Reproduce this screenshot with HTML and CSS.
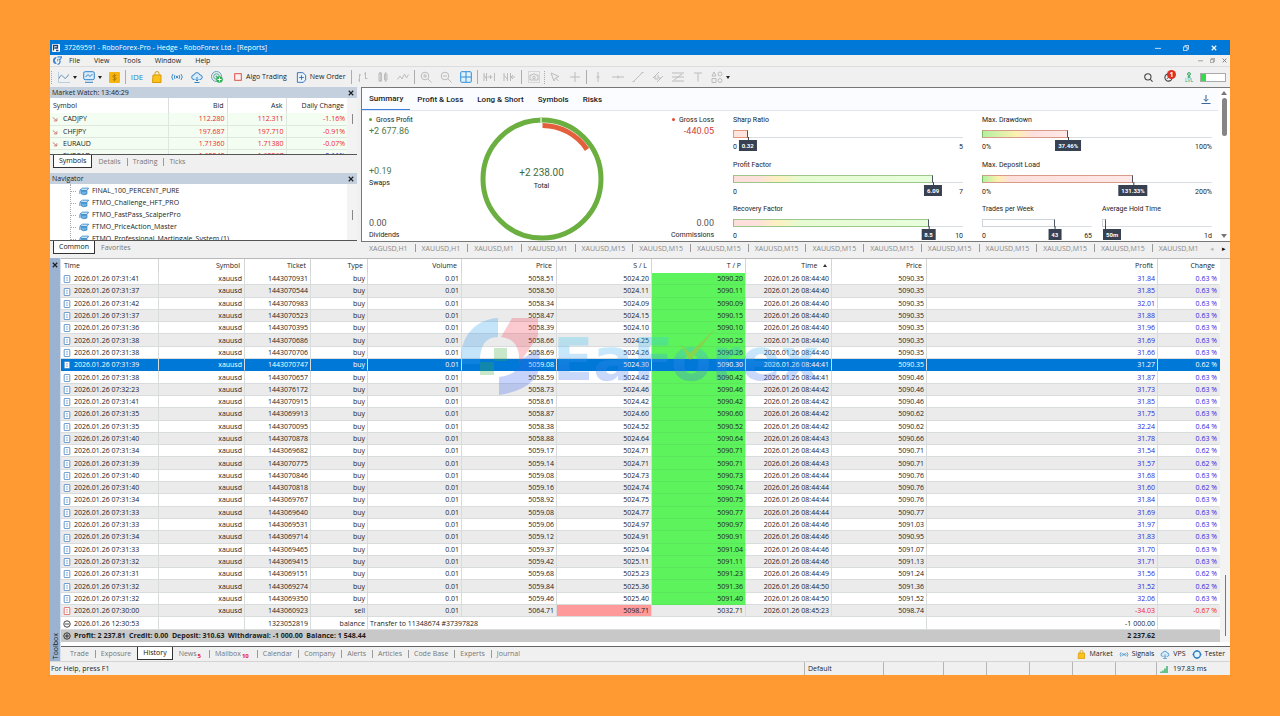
FILE: index.html
```html
<!DOCTYPE html>
<html lang="en">
<head>
<meta charset="utf-8">
<title>37269591 - RoboForex-Pro - Hedge - RoboForex Ltd - [Reports]</title>
<link rel="stylesheet" href="styles.css">
</head>
<body>
<svg class="defs" aria-hidden="true">
  <symbol id="i-bag" viewBox="0 0 12 12"><path d="M2 4h8v7.500H1.500z" fill="#fbc21c" stroke="#d99a06"/><path d="M4 4V2.500a2 2 0 0 1 4 0V4" fill="none" stroke="#d99a06"/></symbol>
  <symbol id="i-signal" viewBox="0 0 12 12"><g fill="none" stroke="#3f8fcb"><path d="M2 3Q-.5 6 2 9M4 4Q2.500 6 4 8M10 3q2.500 3 0 6M8 4q1.500 2 0 4"/></g><circle cx="6" cy="6" r="1.200" fill="#3f8fcb"/></symbol>
  <symbol id="i-cloud" viewBox="0 0 12 12"><path d="M3.500 8.500H3a2.300 2.300 0 0 1 0-4.600 3 3 0 0 1 5.800 0 2.300 2.300 0 0 1 .2 4.600h-.5" fill="#d8ecfa" stroke="#2f83c5"/><path d="M6 6v4M4.500 8.500 6 10l1.500-1.500M3.500 11.500h5" fill="none" stroke="#2f83c5"/></symbol>
  <symbol id="i-cap" viewBox="0 0 12 10"><path d="M1 3.500 4 1h7.500L9.500 4z" fill="#cfe6f8" stroke="#2f83c5"/><path d="M2.500 4.500v3Q5 10 9.500 8V4.500z" fill="#6fb2e6" stroke="#2f83c5"/><path d="M1 4v4" stroke="#2f83c5"/></symbol>
  <symbol id="i-down" viewBox="0 0 8 8"><path d="M1 2 6 6M6.500 3v3.500H2.500" fill="none" stroke="#c25a5a"/></symbol>
  <symbol id="i-doc" viewBox="0 0 8 10"><rect x=".5" y=".5" width="7" height="9" rx="1" fill="#fff" stroke="currentColor"/><path d="M4 2.500v2M4 5.500v2" stroke="currentColor"/></symbol>
  <symbol id="i-minus" viewBox="0 0 8 8"><circle cx="4" cy="4" r="3.200" fill="none" stroke="#444"/><path d="M2 4h4" stroke="#444"/></symbol>
  <symbol id="i-plus" viewBox="0 0 8 8"><circle cx="4" cy="4" r="3.200" fill="none" stroke="#333"/><path d="M2 4h4M4 2v4" stroke="#333"/></symbol>
  <symbol id="i-x" viewBox="0 0 8 8"><path d="M1 1l6 6M7 1 1 7" fill="none" stroke="currentColor" stroke-width="1.500"/></symbol>
  <symbol id="i-min" viewBox="0 0 8 8"><path d="M0 4.500h8" stroke="currentColor"/></symbol>
  <symbol id="i-restore" viewBox="0 0 8 8"><path d="M.5 2.500h5v5h-5zM2.500 2V.5h5v5H6" fill="none" stroke="currentColor"/></symbol>
</svg>

<main class="app">
  <header class="title">
    <svg class="ic8" viewBox="0 0 8 8"><rect width="8" height="8" rx="1" fill="#fff"/><path d="M1.500 6.500V1.500h4v2.500h-3M4 6.500h2.500" fill="none" stroke="#173f78" stroke-width="1.300"/></svg>
    <h1 class="title-text">37269591 - RoboForex-Pro - Hedge - RoboForex Ltd - [Reports]</h1>
    <button class="win" aria-label="Minimize"><svg class="ic6"><use href="#i-min"/></svg></button>
    <button class="win" aria-label="Restore"><svg class="ic6"><use href="#i-restore"/></svg></button>
    <button class="win" aria-label="Close"><svg class="ic6"><use href="#i-x"/></svg></button>
  </header>

  <nav class="menu">
    <svg class="ic9" viewBox="0 0 10 10"><path d="M4 1A4 4 0 0 0 4 9c0-2-2-2-2-4s2-2 2-4z" fill="#3c7fd0"/><path d="M5 1h4.500C9 3 8 4 6.500 4.500M8 5c0 2.500-1 4-3 4.500" fill="none" stroke="#4a8cd8" stroke-width="1.400"/><path d="M5 6V3.500h1.500" fill="none" stroke="#5fa7df"/></svg>
    <button>File</button><button>View</button><button>Tools</button><button>Window</button><button>Help</button>
    <span class="grow"></span>
    <button class="mwin" aria-label="Minimize report"><svg class="ic5"><use href="#i-min"/></svg></button>
    <button class="mwin" aria-label="Restore report"><svg class="ic5"><use href="#i-restore"/></svg></button>
    <button class="mwin" aria-label="Close report"><svg class="ic5"><use href="#i-x"/></svg></button>
  </nav>

  <div class="toolbar">
    <i class="grip"></i>
    <button class="tb drop" aria-label="Chart type"><svg class="ic12" viewBox="0 0 12 12"><path d="M.5 1v10.500H12" fill="none" stroke="#b8cede"/><path d="M1 7.500C3 3 4 4 5.500 6S8 8 10.500 3.500" fill="none" stroke="#5b8fb9"/></svg><i class="caret"></i></button>
    <button class="tb drop" aria-label="Chart template"><svg class="ic12" viewBox="0 0 12 12"><rect x=".7" y=".7" width="10.600" height="8" rx="1.500" fill="#dcedf9" stroke="#2f83c5"/><path d="M2.500 6 5 3.500 7 5.500 9.500 3M2 11.300h8" fill="none" stroke="#2f83c5"/></svg><i class="caret"></i></button>
    <button class="tb dollar" aria-label="Deposit"><svg class="ic11" viewBox="0 0 12 12"><rect width="12" height="12" rx="1" fill="#f5b50e"/><path d="M8 4Q6 2.500 4.500 4T6 6t1.500 2T4 8.200M6 2v8" fill="none" stroke="#b07c08"/></svg></button>
    <i class="sep"></i>
    <button class="tb ide">IDE</button>
    <button class="tb" aria-label="Market"><svg class="ic12"><use href="#i-bag"/></svg></button>
    <button class="tb" aria-label="Signals"><svg class="ic12"><use href="#i-signal"/></svg></button>
    <button class="tb" aria-label="VPS"><svg class="ic12"><use href="#i-cloud"/></svg></button>
    <button class="tb" aria-label="Network"><svg class="ic12" viewBox="0 0 12 12"><circle cx="5.500" cy="5.500" r="5" fill="none" stroke="#5f9fc0"/><circle cx="5.500" cy="5.500" r="2.800" fill="none" stroke="#55a890"/><circle cx="5.500" cy="5.500" r="1" fill="#55a890"/><circle cx="8.500" cy="8.500" r="3.300" fill="#2fb457"/><path d="M8.500 6.500v4M6.500 8.500h4" stroke="#fff"/></svg></button>
    <button class="tb wide"><svg class="ic8" viewBox="0 0 8 8"><rect x=".7" y=".7" width="6.600" height="6.600" fill="#fff0ee" stroke="#d9534a"/></svg>Algo Trading</button>
    <button class="tb wide order"><svg class="ic11" viewBox="0 0 12 12"><path d="M1.500.7h6L10.500 3.500v5L8 11.300H1.500z" fill="#e9f3fc" stroke="#2f6fb5"/><path d="M6 3.500v5M3.500 6h5" stroke="#2f6fb5"/></svg>New Order</button>
    <i class="sep order-sep"></i>
    <span class="off">
      <button class="tb" aria-label="Bars"><svg class="ic12" viewBox="0 0 12 12"><path d="M2.500 3v8M1 9h1.500M2.500 4H4M8.500 1v7M7 3h1.500M8.500 7.500h2"/></svg></button>
      <button class="tb" aria-label="Candles"><svg class="ic12" viewBox="0 0 12 12"><path d="M2 2h2.500v8H2zM7.500 3H10v6H7.500zM3.200 1v10M8.700 1v10"/></svg></button>
      <button class="tb" aria-label="Line"><svg class="ic12" viewBox="0 0 12 12"><path d="M.5 8.500 3 5l2 3 2.500-5L9.500 7l2-3.500"/></svg></button>
      <i class="sep"></i>
      <button class="tb" aria-label="Zoom in"><svg class="ic12" viewBox="0 0 12 12"><circle cx="5" cy="5" r="3.800"/><path d="M8 8l3.500 3.500M3 5h4M5 3v4"/></svg></button>
      <button class="tb" aria-label="Zoom out"><svg class="ic12" viewBox="0 0 12 12"><circle cx="5" cy="5" r="3.800"/><path d="M8 8l3.500 3.500M3 5h4"/></svg></button>
      <button class="tb on" aria-label="Tile windows"><svg class="ic12" viewBox="0 0 12 12"><rect x=".7" y=".7" width="10.600" height="10.600" rx="1" fill="#e3f2fd"/><path d="M6 1v10M1 6h10"/></svg></button>
      <i class="sep"></i>
      <button class="tb" aria-label="Auto scroll"><svg class="ic12" viewBox="0 0 12 12"><path d="M1 2v8M3.500 2v8M1 4l2.500 4M4.500 6h5M7.500 4v4M11.500 2v8"/></svg></button>
      <button class="tb" aria-label="Chart shift"><svg class="ic12" viewBox="0 0 12 12"><path d="M1 2v8M1 4l3 4M4.500 2v8M7.500 2v8M12 6H8M10 4 8 6l2 2"/></svg></button>
      <i class="sep gap"></i>
      <button class="tb" aria-label="Screenshot"><svg class="ic12" viewBox="0 0 12 12"><path d="M.5.5h11v11H.5z" stroke-dasharray="1 1"/><path d="M2 4h2l1-1h2l1 1h2v5H2z"/><circle cx="6" cy="6.500" r="1.300"/></svg></button>
      <i class="grip"></i>
      <button class="tb" aria-label="Cursor"><svg class="ic12" viewBox="0 0 12 12"><path d="M2 2l3 8 1.500-3L10 5.500zM6.500 7l3 3"/></svg></button>
      <button class="tb" aria-label="Crosshair"><svg class="ic12" viewBox="0 0 12 12"><path d="M6 1v10M1 6h10"/></svg></button>
      <i class="sep"></i>
      <button class="tb" aria-label="Vertical line"><svg class="ic12" viewBox="0 0 12 12"><path d="M6 1v10M4.500 6h3"/></svg></button>
      <button class="tb" aria-label="Horizontal line"><svg class="ic12" viewBox="0 0 12 12"><path d="M0 6h12M6 4.500v3"/></svg></button>
      <button class="tb" aria-label="Trendline"><svg class="ic12" viewBox="0 0 12 12"><path d="M1.500 10.500l9-9M.5 10.500h2M9.500 1.500h2"/></svg></button>
      <button class="tb" aria-label="Channel"><svg class="ic12" viewBox="0 0 12 12"><path d="M1 7l6-6M5 11l6-6M3 5v3h3M6 4v3h3"/></svg></button>
      <button class="tb" aria-label="Fibonacci"><svg class="ic12" viewBox="0 0 12 12"><path d="M0 2h12M0 6h12M0 10h12M2 9l8-6"/></svg></button>
      <button class="tb" aria-label="Text"><svg class="ic12" viewBox="0 0 12 12"><path d="M2 2h8M6 2v8.500"/></svg></button>
      <button class="tb drop" aria-label="Objects"><svg class="ic12" viewBox="0 0 12 12"><circle cx="9" cy="3" r="2"/><path d="M1 5l2-4 2 4zM1 7.500h4v4H1z"/><circle cx="9" cy="9.500" r="2"/></svg><i class="caret"></i></button>
    </span>
    <span class="grow"></span>
    <button class="tb" aria-label="Search"><svg class="ic9" viewBox="0 0 10 10"><circle cx="4.300" cy="4.300" r="3.500" fill="none" stroke="#444" stroke-width="1.200"/><path d="M7 7l2.500 2.500" stroke="#444" stroke-width="1.200"/></svg></button>
    <button class="tb bell" aria-label="Notifications"><svg class="ic9" viewBox="0 0 10 10"><circle cx="5" cy="5" r="4" fill="none" stroke="#444" stroke-width="1.200"/><path d="M5 2.500V5L3 6.500" fill="none" stroke="#444"/></svg><b class="count">1</b></button>
    <span class="lvl"><svg class="ic6" viewBox="0 0 6 6"><circle cx="3" cy="2" r="1.400" fill="none" stroke="#21a35b"/><path d="M3 3.500V6M1.500 5h3" stroke="#21a35b"/></svg>LVL</span>
    <span class="battery"><i></i></span>
  </div>

  <section class="upper">
    <aside class="side">
      <div class="panel-head"><h2>Market Watch: 13:46:29</h2><button aria-label="Close market watch"><svg class="ic6"><use href="#i-x"/></svg></button></div>
      <div class="watch">
        <table class="quotes">
          <colgroup><col><col class="q2"><col class="q2"><col class="q3"></colgroup>
          <thead><tr><th>Symbol</th><th>Bid</th><th>Ask</th><th>Daily Change</th></tr></thead>
          <tbody>
            <tr><td><svg class="ic6"><use href="#i-down"/></svg>CADJPY</td><td>112.280</td><td>112.311</td><td>-1.16%</td></tr>
            <tr><td><svg class="ic6"><use href="#i-down"/></svg>CHFJPY</td><td>197.687</td><td>197.710</td><td>-0.91%</td></tr>
            <tr><td><svg class="ic6"><use href="#i-down"/></svg>EURAUD</td><td>1.71360</td><td>1.71380</td><td>-0.07%</td></tr>
            <tr><td><svg class="ic6"><use href="#i-down"/></svg>EURCAD</td><td>1.62240</td><td>1.62267</td><td class="up">0.11%</td></tr>
          </tbody>
        </table>
        <span class="track"><i class="thin"></i></span>
      </div>
      <div class="tabs"><button class="active">Symbols</button><button>Details</button><button>Trading</button><button>Ticks</button></div>

      <div class="panel-head nav-head"><h2>Navigator</h2><button aria-label="Close navigator"><svg class="ic6"><use href="#i-x"/></svg></button></div>
      <div class="tree">
        <ul>
          <li><svg class="ic10"><use href="#i-cap"/></svg>FINAL_100_PERCENT_PURE</li>
          <li><svg class="ic10"><use href="#i-cap"/></svg>FTMO_Challenge_HFT_PRO</li>
          <li><svg class="ic10"><use href="#i-cap"/></svg>FTMO_FastPass_ScalperPro</li>
          <li><svg class="ic10"><use href="#i-cap"/></svg>FTMO_PriceAction_Master</li>
          <li><svg class="ic10"><use href="#i-cap"/></svg>FTMO_Professional_Martingale_System (1)</li>
        </ul>
        <span class="track"><i class="thin low"></i></span>
      </div>
      <div class="tabs"><button class="active">Common</button><button>Favorites</button></div>
    </aside>

    <div class="report-wrap">
      <div class="report">
        <div class="report-main">
          <div class="report-tabs"><button class="active">Summary</button><button>Profit &amp; Loss</button><button>Long &amp; Short</button><button>Symbols</button><button>Risks</button><span class="grow"></span>
            <button class="dl" aria-label="Download report"><svg class="ic10" viewBox="0 0 10 10"><path d="M5 0v7M2.500 4.500 5 7l2.500-2.500M0 9.500h10" fill="none" stroke="#2a6097" stroke-width="1.100"/></svg></button></div>
          <div class="report-body">
            <div class="totals">
              <div class="col">
                <div><span class="lab dot green">Gross Profit</span><span class="val pos">+2 677.86</span></div>
                <div><span class="val pos">+0.19</span><span class="lab">Swaps</span></div>
                <div><span class="val">0.00</span><span class="lab">Dividends</span></div>
              </div>
              <div class="ring">
                <svg viewBox="0 0 124 124"><circle cx="62" cy="62" r="59" fill="none" stroke="#6aaf3f" stroke-width="5"/><path d="M61 0v6" stroke="#bfe0a8" stroke-width="2"/><path d="M62.500 8.500A53.500 53.500 0 0 1 107 32.500" fill="none" stroke="#e4603c" stroke-width="5"/></svg>
                <div class="ring-text"><span class="big">+2 238.00</span><span class="lab">Total</span></div>
              </div>
              <div class="col right">
                <div><span class="lab dot red">Gross Loss</span><span class="val neg">-440.05</span></div>
                <div><span class="val">0.00</span><span class="lab">Commissions</span></div>
              </div>
            </div>
            <div class="gauges">
              <div class="gauge"><span class="lab">Sharp Ratio</span><div class="bar"><i class="fill low-red" style="width:6.4%"></i><b class="badge" style="left:6.4%">0.32</b></div><div class="scale"><span>0</span><span>5</span></div></div>
              <div class="gauge"><span class="lab">Profit Factor</span><div class="bar"><i class="fill good" style="width:87%"></i><b class="badge" style="left:87%">6.09</b></div><div class="scale"><span>0</span><span>7</span></div></div>
              <div class="gauge"><span class="lab">Recovery Factor</span><div class="bar"><i class="fill good" style="width:85%"></i><b class="badge" style="left:85%">8.5</b></div><div class="scale"><span>0</span><span>10</span></div></div>
            </div>
            <div class="gauges">
              <div class="gauge"><span class="lab">Max. Drawdown</span><div class="bar"><i class="fill bad" style="width:37.46%"></i><b class="badge" style="left:37.46%">37.46%</b></div><div class="scale"><span>0%</span><span>100%</span></div></div>
              <div class="gauge"><span class="lab">Max. Deposit Load</span><div class="bar"><i class="fill bad2" style="width:65.67%"></i><b class="badge" style="left:65.67%">131.33%</b></div><div class="scale"><span>0%</span><span>200%</span></div></div>
              <div class="pair">
                <div class="gauge"><span class="lab">Trades per Week</span><div class="bar"><i class="fill" style="width:66.2%"></i><b class="badge" style="left:66.2%">43</b></div><div class="scale"><span>0</span><span>65</span></div></div>
                <div class="gauge"><span class="lab">Average Hold Time</span><div class="bar"><i class="fill" style="width:3.5%"></i><b class="badge start">50m</b></div><div class="scale"><span></span><span>1d</span></div></div>
              </div>
            </div>
          </div>
        </div>
        <div class="vscroll"><i class="tri up-tri"></i><i class="thumb"></i><i class="tri down-tri"></i></div>
      </div>
      <div class="chart-tabs">
        <button>XAGUSD,H1</button><button>XAUUSD,H1</button><button>XAUUSD,M1</button><button>XAUUSD,M1</button><button>XAUUSD,M15</button><button>XAUUSD,M15</button><button>XAUUSD,M15</button><button>XAUUSD,M15</button><button>XAUUSD,M15</button><button>XAUUSD,M15</button><button>XAUUSD,M15</button><button>XAUUSD,M15</button><button>XAUUSD,M15</button><button>XAUUSD,M15</button><button>XAUUSD,M1</button>
        <span class="grow"></span><button class="arrow dim" aria-label="Scroll left">◂</button><button class="arrow" aria-label="Scroll right">▸</button>
      </div>
    </div>
  </section>

  <section class="toolbox">
    <div class="strip"><button aria-label="Close toolbox"><svg class="ic6"><use href="#i-x"/></svg></button><span>Toolbox</span></div>
    <div class="tool-main">
      <div class="history-wrap">
        <table class="history">
          <colgroup><col class="c-time"><col class="c-sym"><col class="c-tick"><col class="c-type"><col class="c-num"><col class="c-wide"><col class="c-wide"><col class="c-num"><col class="c-close"><col class="c-wide"><col><col class="c-chg"></colgroup>
          <thead><tr><th>Time</th><th>Symbol</th><th>Ticket</th><th>Type</th><th>Volume</th><th>Price</th><th>S / L</th><th>T / P</th><th>Time &nbsp;<i class="sort"></i></th><th>Price</th><th>Profit</th><th>Change</th></tr></thead>
          <tbody id="deals"></tbody>
          <tbody>
            <tr class="balance"><td><svg class="ic8"><use href="#i-minus"/></svg>2026.01.26 12:30:53</td><td></td><td>1323052819</td><td>balance</td><td colspan="6" class="note">Transfer to 11348674 #37397828</td><td>-1 000.00</td><td></td></tr>
            <tr class="total"><td colspan="10"><svg class="ic8"><use href="#i-plus"/></svg>Profit: 2 237.81 &nbsp;Credit: 0.00 &nbsp;Deposit: 310.63 &nbsp;Withdrawal: -1 000.00 &nbsp;Balance: 1 548.44</td><td>2 237.62</td><td></td></tr>
          </tbody>
        </table>
        <span class="hscroll"><i></i></span>
        <svg class="watermark" viewBox="0 0 370 80" aria-hidden="true">
          <defs><linearGradient id="wm" x1="0" y1="0" x2="0" y2="1"><stop offset=".2" stop-color="#35c8f5"/><stop offset=".8" stop-color="#3f6cf0"/></linearGradient></defs>
          <path d="M39 1A38 38 0 0 0 3 47h18Q20 20 39 20z" fill="#2f9ff0"/>
          <path d="M53 1H79V19L60 47Q62 22 42 20z" fill="#f0455a"/>
          <path d="M79 32Q90 70 40 78V60Q60 58 63 42z" fill="#3a66ee"/>
          <path d="M35 31h13v13H35zM21 45h14v13H21z" fill="#3fae3f"/>
          <text x="94" y="63" class="wm-text" fill="url(#wm)">EaForex</text>
          <path d="M221 27l10 17 27-34-27 26z" fill="#f08a2a"/>
        </svg>
      </div>
      <div class="tool-tabs">
        <div class="tabs"><button>Trade</button><button>Exposure</button><button class="active">History</button><button>News<sub>5</sub></button><button>Mailbox<sub>10</sub></button><button>Calendar</button><button>Company</button><button>Alerts</button><button>Articles</button><button>Code Base</button><button>Experts</button><button>Journal</button></div>
        <span class="grow"></span>
        <button class="svc"><svg class="ic9"><use href="#i-bag"/></svg>Market</button>
        <button class="svc"><svg class="ic10"><use href="#i-signal"/></svg>Signals</button>
        <button class="svc"><svg class="ic10"><use href="#i-cloud"/></svg>VPS</button>
        <button class="svc"><svg class="ic10" viewBox="0 0 10 10"><circle cx="5" cy="5" r="3.800" fill="#e4f3fd" stroke="#2f83c5" stroke-width="1.600"/><path d="M5 0v1M5 9v1M0 5h1M9 5h1" stroke="#2f83c5" stroke-width="1.500"/></svg>Tester</button>
      </div>
    </div>
  </section>

  <footer class="status">
    <span class="grow">For Help, press F1</span><span class="s79">Default</span><span class="s60"></span><span class="s43"></span><span class="s43"></span><span class="s43"></span><span class="s43"></span><span class="s41"></span>
    <span class="ping"><svg class="ic8" viewBox="0 0 8 8"><path d="M1 8V6.500M3 8V5.500M5 8V3.500M7 8V1" stroke="#3db26a" stroke-width="1.500"/></svg>197.83 ms</span>
  </footer>
</main>
<script src="app.js"></script>
</body>
</html>
```
FILE: styles.css
```css
* { box-sizing: border-box; }
body {
  margin: 0;
  min-height: 100vh;
  display: flex;
  padding: 40px 50px 41px;
  background: #ff9a33;
  font: 7px/12px "Open Sans", "Noto Sans", sans-serif;
  color: #1c1c1c;
}
button {
  margin: 0; padding: 0; border: 0; background: none;
  font: inherit; color: inherit; white-space: nowrap;
}
h1, h2 { margin: 0; font: inherit; }
svg { display: block; flex: none; }
i { font-style: normal; }
.defs { position: absolute; width: 0; height: 0; }
.grow { flex: 1; }
.ic5 { width: 5px; height: 5px; }
.ic6 { width: 6px; height: 6px; }
.ic8 { width: 8px; height: 8px; }
.ic9 { width: 9px; height: 9px; }
.ic10 { width: 10px; height: 9px; }
.ic11 { width: 11px; height: 11px; }
.ic12 { width: 12px; height: 12px; }

.app { flex: 1; min-width: 0; display: flex; flex-direction: column; background: #f0f0f0; }

.title { display: flex; align-items: center; height: 15px; padding: 0 2px; background: #0078d7; color: #fff; }
.title-text { flex: 1; margin-left: 4px; }
.win { width: 28px; display: flex; justify-content: center; }

.menu { display: flex; align-items: center; height: 12px; padding-left: 3px; border-bottom: 1px solid #dcdcdc; background: #f1f1f0; }
.menu button { margin-left: 14px; }
.menu svg + button { margin-left: 7px; }
.menu .mwin { width: 12px; margin: 0; display: flex; justify-content: center; color: #777; }

.toolbar { display: flex; align-items: center; height: 20px; padding-right: 4px; background: #f0f0f0; }
.grip { width: 4px; height: 13px; border-left: 1px dotted #aaa; margin-left: 1px; }
.tb { width: 20px; height: 18px; display: flex; align-items: center; justify-content: center; }
.tb.drop { width: 25px; gap: 3px; }
.tb.dollar { width: 19px; }
.caret { border: 2px solid transparent; border-top: 3px solid #222; border-bottom: 0; }
.sep { width: 1px; height: 14px; margin: 0 1px; background: #adadad; }
.sep.gap { margin: 0 2px; }
.tb.ide { color: #2f83c5; font-size: 8px; }
.tb.wide { width: auto; gap: 4px; margin-left: 7px; }
.tb.order { margin-left: 9px; gap: 3px; }
.order-sep { margin-left: 5px; }
.off { display: flex; align-items: center; }
.off svg { fill: none; stroke: #bcbcbc; }
.off .on svg { stroke: #2b8fdc; }
.off .grip { width: 1px; margin: 0; }
.bell { position: relative; }
.count { position: absolute; right: 2px; top: 2px; width: 9px; height: 9px; border-radius: 50%; background: #dc3023; color: #fff; font-size: 7px; line-height: 9px; }
.lvl { width: 22px; display: flex; flex-direction: column; align-items: center; font-size: 5px; line-height: 5px; color: #21a35b; }
.battery { width: 26px; height: 9px; border: 1px solid #aaa; background: #fff; }
.battery i { display: block; width: 5px; height: 7px; background: #35d94a; }

.upper { display: flex; height: 170px; }
.side { width: 308px; flex: none; padding-right: 1px; }
.panel-head { display: flex; justify-content: space-between; align-items: center; height: 11px; padding: 0 3px 0 2px; background: #c5d0df; line-height: 10px; }
.nav-head { margin-top: 5px; }
.watch, .tree { display: flex; overflow: hidden; background: #fff; border-bottom: 1px solid #555; }
.watch { height: 57px; }
.tree { height: 57px; }
.track { width: 10px; flex: none; background: #f3f3f3; }
.thin { display: block; width: 1px; height: 10px; margin: 16px auto 0; background: #888; }
.thin.low { margin-top: 26px; }
.quotes { flex: 1; table-layout: fixed; border-collapse: collapse; }
.quotes th { height: 15px; padding: 0 3px; font-weight: 400; text-align: right; border-left: 1px solid #dcdcdc; }
.quotes td { height: 12px; padding: 0 2px; text-align: right; color: #f0252b; background: #f3fdf1; border-left: 1px solid #dfe8df; border-bottom: 1px solid #dfe8df; line-height: 11px; }
.quotes th:first-child, .quotes td:first-child { text-align: left; border-left: 0; color: #1c1c1c; }
.quotes td svg { display: inline-block; vertical-align: middle; margin-right: 5px; }
.quotes .up { color: #1a22e0; }
.q2 { width: 59px; }
.q3 { width: 61px; }

.tabs { display: flex; height: 13px; padding-left: 3px; color: #777; }
.tabs button { padding: 0 6px; line-height: 12px; position: relative; }
.tabs button + button::before { content: ""; position: absolute; left: 0; top: 3px; height: 8px; width: 1px; background: #999; }
.tabs .active { background: #fff; border: 1px solid #333; border-top: 0; color: #111; padding: 0 5px; }
.tabs .active::before, .tabs .active + button::before { display: none; }

.tree ul { flex: 1; margin: 0 0 0 20px; padding: 1px 0 0; list-style: none; border-left: 1px dotted #aaa; }
.tree li { display: flex; align-items: center; gap: 3px; height: 12px; white-space: nowrap; }
.tree li::before { content: ""; width: 5px; border-top: 1px dotted #aaa; }

.report-wrap { flex: 1; min-width: 0; margin-left: 3px; display: flex; flex-direction: column; }
.report { height: 155px; display: flex; background: #fff; border: 1px solid #777; border-right: 0; font-family: Roboto, sans-serif; }
.report-main { flex: 1; min-width: 0; display: flex; flex-direction: column; }
.report-tabs { display: flex; height: 23px; border-bottom: 1px solid #dfe6ee; background: #fafcff; font-size: 8px; font-weight: 500; }
.report-tabs button { padding: 1px 7px 0; }
.report-tabs .active { border-bottom: 1px solid #3c7ddb; }
.report-body { flex: 1; display: grid; grid-template-columns: 345fr 230fr 230fr; gap: 19px; padding: 3px 6px 0 7px; }
.totals { display: grid; grid-template-columns: 1fr auto 1fr; }
.col { display: flex; flex-direction: column; justify-content: space-between; }
.col > div, .ring-text { display: flex; flex-direction: column; }
.col.right { text-align: right; }
.lab { line-height: 12px; }
.val { font-size: 9px; line-height: 11px; color: #555; }
.pos { color: #4c7a50; }
.neg { color: #d0403a; }
.dot::before { content: ""; display: inline-block; width: 3px; height: 3px; margin-right: 4px; border-radius: 50%; vertical-align: 1px; background: #5aa732; }
.dot.red::before { background: #e5452f; }
.ring { display: grid; align-content: end; width: 124px; }
.ring > * { grid-area: 1 / 1; }
.ring svg { width: 124px; height: 124px; }
.ring-text { align-items: center; align-self: center; line-height: 14px; }
.big { font-size: 10px; color: #3c6c46; }
.gauges { display: flex; flex-direction: column; justify-content: space-between; }
.gauge { flex: 1; height: 38px; }
.gauges > .gauge, .pair { flex: none; }
.pair { display: grid; grid-template-columns: 1fr 1fr; gap: 10px; }
.gauge .lab { display: block; }
.bar { position: relative; height: 8px; margin-top: 4px; border-bottom: 1px solid #d9dee5; }
.fill { display: block; height: 8px; border: 1px solid #cfd4da; border-right: 1px solid #4b5563; }
.low-red { background: #fde4dc; border-color: #e5967c #4b5563 #e5967c #e5967c; }
.good { background: linear-gradient(90deg, #fde0dc 12%, #fdf0c0 22%, #e6fbd2 34%, #e8ffdd); border-color: #9cc68a #4b5563 #9cc68a #e5967c; }
.bad { background: linear-gradient(90deg, #b5f0a0, #fdf0b0 40%, #fde0dc 58%, #fde8e8); border-color: #d99a8a #4b5563 #d99a8a #7dbb68; }
.bad2 { background: linear-gradient(90deg, #b5f0a0, #fdf0b0 10%, #fde0dc 18%, #fde8e8); border-color: #d99a8a #4b5563 #d99a8a #7dbb68; }
.badge { position: absolute; top: 10px; z-index: 1; transform: translateX(-50%); padding: 0 3px; background: #374151; color: #fff; font-size: 6px; line-height: 11px; }
.badge::before { content: ""; position: absolute; left: 50%; top: -3px; width: 1px; height: 3px; background: #374151; }
.badge.start { left: 1px; transform: none; }
.badge.start::before { left: 2px; }
.scale { display: flex; justify-content: space-between; line-height: 12px; margin-top: 3px; }
.vscroll { width: 12px; display: flex; flex-direction: column; align-items: center; padding: 3px 0; }
.thumb { width: 5px; height: 38px; margin: 3px 0 auto; border-radius: 3px; background: #858585; }
.tri { border: 3px solid transparent; }
.up-tri { border-top: 0; border-bottom: 4px solid #777; }
.down-tri { border-bottom: 0; border-top: 4px solid #777; }
.chart-tabs { display: flex; height: 14px; padding-left: 1px; overflow: hidden; color: #888; }
.chart-tabs button { position: relative; padding: 0 7px; line-height: 12px; }
.chart-tabs button:not(.arrow) + button::before { content: ""; position: absolute; left: 0; top: 2px; width: 1px; height: 8px; background: #999; }
.chart-tabs .arrow { padding: 0 4px; color: #111; }
.chart-tabs .dim { color: #bbb; }

.toolbox { flex: 1; display: flex; margin-top: 1px; }
.strip { width: 11px; display: flex; flex-direction: column; align-items: center; justify-content: space-between; padding: 4px 0 2px; background: #9ab3d3; border-right: 1px solid #d8e0ea; }
.strip span { writing-mode: vertical-rl; transform: rotate(180deg); line-height: 9px; }
.tool-main { flex: 1; min-width: 0; display: flex; flex-direction: column; }
.history-wrap { position: relative; flex: 1; display: flex; border-top: 1px solid #b8b8b8; border-bottom: 1px solid #666; padding-bottom: 4px; background: #fff; }
.history { flex: 1; min-width: 0; table-layout: fixed; border-collapse: separate; border-spacing: 0; }
.history th { height: 14px; padding: 0 4px; font-weight: 400; text-align: right; border-right: 1px solid #d4d4d4; white-space: nowrap; }
.history td { height: 12px; padding: 0 2px; text-align: right; white-space: nowrap; line-height: 11px; border-right: 1px solid #d9dcdc; border-bottom: 1px solid #d9dcdc; }
.history th:first-child, .history td:first-child { text-align: left; padding-left: 2px; }
.history th:last-child, .history td:last-child { border-right-color: transparent; }
.history th:first-child { padding-left: 3px; }
.history td svg { display: inline-block; vertical-align: middle; margin-right: 3px; }
.history tbody#deals tr:nth-child(even) { background: #ebebeb; }
.history .buy-ic { color: #3f7fc1; }
.history .sell-ic { color: #d9534a; }
.history .tp { background: #5cf35c; border-bottom-color: #5ce65c; }
.history .sl { background: #ff9a9a; }
.history .gain { color: #2e1fe0; }
.history .loss { color: #ee1f2d; }
.history tbody#deals tr.selected { background: #0078d7; color: #fff; }
.history .selected td { border-bottom-color: #0078d7; }
.history .selected .tp { background: #0078d7; }
.history .selected .gain { color: #fff; }
.history td.note { text-align: left; }
.history .total td { background: #c8c8c8; border-color: #c8c8c8; font-weight: 700; }
.sort { display: inline-block; border: 2px solid transparent; border-top: 0; border-bottom: 3px solid #333; vertical-align: 1px; margin-left: 2px; }
.c-time { width: 98px; } .c-sym { width: 86px; } .c-tick { width: 66px; } .c-type { width: 57px; }
.c-num { width: 94px; } .c-wide { width: 95px; } .c-close { width: 86px; } .c-chg { width: 62px; }
.hscroll { width: 10px; display: flex; flex-direction: column; justify-content: flex-end; align-items: center; padding-bottom: 6px; background: #f3f3f3; }
.hscroll i { width: 1px; height: 61px; background: #777; }
.watermark { position: absolute; left: 398px; top: 58px; width: 370px; height: 80px; opacity: .28; pointer-events: none; }
.wm-text { font: 700 59px "DejaVu Sans", sans-serif; }

.tool-tabs { display: flex; height: 14px; padding-right: 5px; }
.tool-tabs sub { margin: 0 2px 0 1px; vertical-align: -2px; font-size: 6px; line-height: 6px; color: #e8202c; font-weight: 700; }
.svc { display: flex; align-items: center; gap: 3px; margin-left: 6px; }
.status { display: flex; height: 14px; border-top: 1px solid #d4d4d4; line-height: 13px; }
.status span { padding-left: 1px; white-space: nowrap; }
.status span + span { border-left: 1px solid #b5b5b5; padding-left: 3px; }
.s79 { width: 79px; } .s60 { width: 60px; } .s43 { width: 43px; } .s41 { width: 41px; }
.status .ping { width: 74px; display: flex; align-items: center; gap: 5px; }
```
FILE: app.js
```js
// open time, ticket, open price, stop, target, close time, close price, profit, change
const deals = [
  ["07:31:41", "1443070931", "5058.51", "5024.20", "5090.20", "08:44:40", "5090.35", "31.84", "0.63"],
  ["07:31:37", "1443070544", "5058.50", "5024.11", "5090.11", "08:44:40", "5090.35", "31.85", "0.63"],
  ["07:31:42", "1443070983", "5058.34", "5024.09", "5090.09", "08:44:40", "5090.35", "32.01", "0.63"],
  ["07:31:37", "1443070523", "5058.47", "5024.15", "5090.15", "08:44:40", "5090.35", "31.88", "0.63"],
  ["07:31:36", "1443070395", "5058.39", "5024.10", "5090.10", "08:44:40", "5090.35", "31.96", "0.63"],
  ["07:31:38", "1443070686", "5058.66", "5024.25", "5090.25", "08:44:40", "5090.35", "31.69", "0.63"],
  ["07:31:38", "1443070706", "5058.69", "5024.26", "5090.26", "08:44:40", "5090.35", "31.66", "0.63"],
  ["07:31:39", "1443070747", "5059.08", "5024.30", "5090.30", "08:44:41", "5090.35", "31.27", "0.62"],
  ["07:31:38", "1443070657", "5058.59", "5024.42", "5090.42", "08:44:41", "5090.46", "31.87", "0.63"],
  ["07:32:23", "1443076172", "5058.73", "5024.46", "5090.46", "08:44:42", "5090.46", "31.73", "0.63"],
  ["07:31:41", "1443070915", "5058.61", "5024.42", "5090.42", "08:44:42", "5090.46", "31.85", "0.63"],
  ["07:31:35", "1443069913", "5058.87", "5024.60", "5090.60", "08:44:42", "5090.62", "31.75", "0.63"],
  ["07:31:35", "1443070095", "5058.38", "5024.52", "5090.52", "08:44:42", "5090.62", "32.24", "0.64"],
  ["07:31:40", "1443070878", "5058.88", "5024.64", "5090.64", "08:44:43", "5090.66", "31.78", "0.63"],
  ["07:31:34", "1443069682", "5059.17", "5024.71", "5090.71", "08:44:43", "5090.71", "31.54", "0.62"],
  ["07:31:39", "1443070775", "5059.14", "5024.71", "5090.71", "08:44:43", "5090.71", "31.57", "0.62"],
  ["07:31:40", "1443070846", "5059.08", "5024.73", "5090.73", "08:44:44", "5090.76", "31.68", "0.63"],
  ["07:31:40", "1443070818", "5059.16", "5024.74", "5090.74", "08:44:44", "5090.76", "31.60", "0.62"],
  ["07:31:34", "1443069767", "5058.92", "5024.75", "5090.75", "08:44:44", "5090.76", "31.84", "0.63"],
  ["07:31:33", "1443069640", "5059.08", "5024.77", "5090.77", "08:44:44", "5090.77", "31.69", "0.63"],
  ["07:31:33", "1443069531", "5059.06", "5024.97", "5090.97", "08:44:46", "5091.03", "31.97", "0.63"],
  ["07:31:34", "1443069714", "5059.12", "5024.91", "5090.91", "08:44:46", "5090.95", "31.83", "0.63"],
  ["07:31:33", "1443069465", "5059.37", "5025.04", "5091.04", "08:44:46", "5091.07", "31.70", "0.63"],
  ["07:31:32", "1443069415", "5059.42", "5025.11", "5091.11", "08:44:46", "5091.13", "31.71", "0.63"],
  ["07:31:31", "1443069151", "5059.68", "5025.23", "5091.23", "08:44:49", "5091.24", "31.56", "0.62"],
  ["07:31:32", "1443069274", "5059.84", "5025.36", "5091.36", "08:44:50", "5091.36", "31.52", "0.62"],
  ["07:31:32", "1443069350", "5059.46", "5025.40", "5091.40", "08:44:50", "5091.52", "32.06", "0.63"],
  ["07:30:00", "1443060923", "5064.71", "5098.71", "5032.71", "08:45:23", "5098.74", "-34.03", "-0.67"]
];

const day = "2026.01.26 ";
document.getElementById("deals").innerHTML = deals.map((d, i) => {
  const sell = d[7].startsWith("-");
  const tone = sell ? "loss" : "gain";
  return `<tr class="${i === 7 ? "selected" : ""}">
    <td><svg class="ic8 ${sell ? "sell-ic" : "buy-ic"}"><use href="#i-doc"/></svg>${day}${d[0]}</td>
    <td>xauusd</td><td>${d[1]}</td><td>${sell ? "sell" : "buy"}</td><td>0.01</td>
    <td>${d[2]}</td><td class="${sell ? "sl" : ""}">${d[3]}</td><td class="${sell ? "" : "tp"}">${d[4]}</td>
    <td>${day}${d[5]}</td><td>${d[6]}</td><td class="${tone}">${d[7]}</td><td class="${tone}">${d[8]} %</td>
  </tr>`;
}).join("");
```
